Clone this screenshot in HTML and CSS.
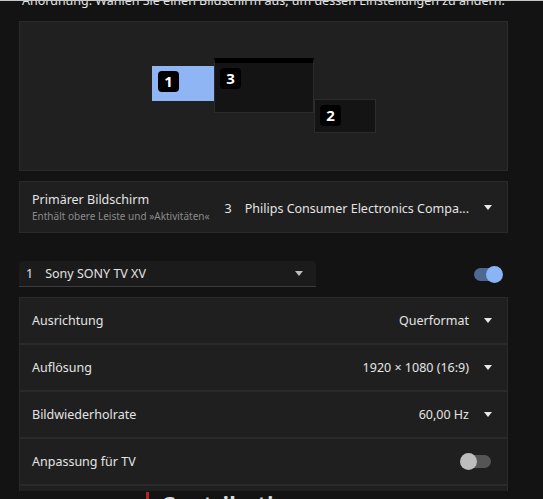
FILE: index.html
```html
<!DOCTYPE html>
<html lang="de">
<head>
<meta charset="utf-8">
<link rel="stylesheet" href="styles.css">
</head>
<body>
<div class="topline"></div>
<div class="page">
  <p class="intro">Anordnung. Wählen Sie einen Bildschirm aus, um dessen Einstellungen zu ändern.</p>

  <div class="arrangement">
    <div class="mon mon1"><span class="badge">1</span></div>
    <div class="mon mon3"><span class="badge">3</span></div>
    <div class="mon mon2"><span class="badge">2</span></div>
  </div>

  <div class="card primary">
    <div class="labels">
      <div class="title">Primärer Bildschirm</div>
      <div class="subtitle">Enthält obere Leiste und »Aktivitäten«</div>
    </div>
    <div class="value"><span class="num">3</span>Philips Consumer Electronics Compa...</div>
    <span class="arrow"></span>
  </div>

  <div class="monitor-row">
    <div class="select">
      <span class="num">1</span><span class="sel-name">Sony SONY TV XV</span>
      <span class="arrow"></span>
    </div>
    <div class="switch on"><span class="knob"></span></div>
  </div>

  <div class="card list">
    <div class="row"><span class="rlabel">Ausrichtung</span><span class="rvalue">Querformat</span><span class="arrow"></span></div>
    <div class="row"><span class="rlabel">Auflösung</span><span class="rvalue">1920 × 1080 (16:9)</span><span class="arrow"></span></div>
    <div class="row"><span class="rlabel">Bildwiederholrate</span><span class="rvalue">60,00 Hz</span><span class="arrow"></span></div>
    <div class="row"><span class="rlabel">Anpassung für TV</span><div class="switch off"><span class="knob"></span></div></div>
    <div class="row stub"></div>
  </div>
</div>
<div class="behind">
  <span class="redbar"></span><span class="contrib">Contributions</span>
</div>
</body>
</html>
```

FILE: styles.css
```css
html, body {
  margin: 0;
  padding: 0;
  background: #131313;
  color: #e2e2e2;
  font-family: "Noto Sans", "DejaVu Sans", sans-serif;
  font-size: 12.5px;
  overflow: hidden;
  height: 499px;
}
.topline {
  height: 1px;
  background: #c8c8c8;
  position: relative;
  z-index: 2;
}
.page {
  padding: 0 35px 0 19px;
}
.intro {
  margin: -9px 0 0 3px;
  line-height: 18px;
  font-size: 12.5px;
  color: #e4e4e4;
  white-space: nowrap;
}
.arrangement {
  position: relative;
  margin-top: 11px;
  height: 148px;
  background: #202020;
  border: 1px solid #2b2b2b;
}
.mon {
  position: absolute;
  box-sizing: border-box;
}
.mon1 {
  left: 132px; top: 44px; width: 62px; height: 35px;
  background: #8fb5f5;
}
.mon3 {
  left: 194px; top: 36px; width: 100px; height: 55px;
  background: #141414;
  border: 1px solid #2c2c2c;
  border-top: 5px solid #000;
}
.mon2 {
  left: 294px; top: 77px; width: 62px; height: 34px;
  background: #141414;
  border: 1px solid #2c2c2c;
}
.badge {
  position: absolute;
  width: 21px; height: 21px;
  border-radius: 4px;
  background: #000;
  color: #fff;
  font-weight: bold;
  font-size: 15px;
  line-height: 21px;
  text-align: center;
}
.mon1 .badge { left: 6px; top: 5px; }
.mon3 .badge { left: 5px; top: 5px; }
.mon2 .badge { left: 5px; top: 5px; }

.card {
  background: #1f1f1f;
  border: 1px solid #2a2a2a;
}
.primary {
  margin-top: 10px;
  height: 50px;
  display: flex;
  align-items: center;
  padding: 0 15px 0 12px;
}
.labels { flex: 1; min-width: 0; white-space: nowrap; }
.title { font-size: 12.5px; line-height: 17px; color: #e4e4e4; }
.subtitle { font-size: 10px; line-height: 14px; color: #8a8a8a; margin-top: 1px; }
.value {
  display: flex;
  white-space: nowrap;
  color: #e4e4e4;
  margin-right: 15px;
  margin-top: 2px;
}
.num { margin-right: 13px; }
.arrow {
  width: 0; height: 0;
  border-left: 4.5px solid transparent;
  border-right: 4.5px solid transparent;
  border-top: 5px solid #e8e8e8;
}

.monitor-row {
  margin-top: 28px;
  height: 26px;
  display: flex;
  align-items: center;
  justify-content: space-between;
}
.select {
  box-sizing: border-box;
  width: 297px;
  height: 26px;
  background: #1b1b1b;
  border-radius: 4px 4px 0 0;
  border-bottom: 1px solid #3c3c3c;
  display: flex;
  align-items: center;
  padding: 0 13px 0 7px;
}
.select .num { margin-right: 12px; }
.sel-name { flex: 1; }
.select .arrow { border-top-color: #bdbdbd; }

.switch {
  position: relative;
  width: 24px; height: 13px;
  border-radius: 7px;
}
.switch .knob {
  position: absolute;
  top: 50%;
  width: 17px; height: 17px;
  border-radius: 50%;
  margin-top: -8.5px;
}
.switch.on { background: #4e6890; margin-right: 10px; }
.switch.on .knob { right: -5px; background: #8ab4f8; }
.switch.off { background: #555; width: 28px; margin-right: 1px; }
.switch.off .knob { left: -3px; background: #bdbdbd; }

.list {
  margin-top: 10px;
  border-bottom: none;
}
.row {
  height: 45px;
  display: flex;
  align-items: center;
  padding: 0 15px 0 12px;
  border-bottom: 2px solid #2a2a2a;
}
.rlabel { flex: 1; color: #e4e4e4; }
.rvalue { margin-right: 15px; color: #e4e4e4; }
.row.stub { height: 5px; border-bottom: none; }

.behind {
  display: flex;
  align-items: flex-start;
  padding-left: 146px;
  height: 40px;
  overflow: hidden;
  margin-top: 1px;
}
.redbar {
  width: 3px; height: 30px;
  background: #b3261e;
  margin-right: 12px;
}
.contrib {
  font-size: 22px;
  font-weight: bold;
  color: #d9d9d9;
  line-height: 30px;
  margin-top: -4px;
}
```
